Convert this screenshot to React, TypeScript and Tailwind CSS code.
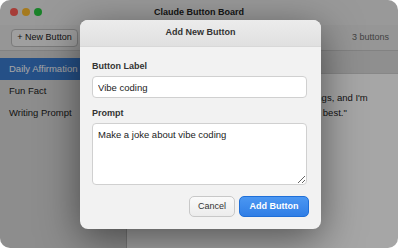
import { useState } from 'react'

const items = ['Daily Affirmation', 'Fun Fact', 'Writing Prompt']

export default function App() {
  const [label, setLabel] = useState('Vibe coding')
  const [prompt, setPrompt] = useState('Make a joke about vibe coding')
  const [selected] = useState(0)

  return (
    <div className="h-[250px] w-[400px] bg-white font-['Liberation_Sans',Arial,sans-serif] text-[#222]">
      <div className="relative flex h-[248px] w-[398px] flex-col overflow-hidden rounded-[10px] bg-white">
        {/* title bar */}
        <div className="relative flex h-[25px] shrink-0 items-center justify-center bg-[#ececec]">
          <div className="absolute left-[10px] top-[8px] flex gap-[4px]">
            <span className="h-[8px] w-[8px] rounded-full bg-[#ff5f57]" />
            <span className="h-[8px] w-[8px] rounded-full bg-[#febc2e]" />
            <span className="h-[8px] w-[8px] rounded-full bg-[#28c840]" />
          </div>
          <span className="text-[9px] font-bold text-[#222]">Claude Button Board</span>
        </div>

        {/* toolbar */}
        <div className="flex h-[26px] shrink-0 items-center justify-between border-b border-[#c8c8c8] bg-[#e6e6e6] pl-[11px] pr-[9px]">
          <button className="flex h-[18px] w-[67px] items-center justify-center rounded-[4px] border border-[#bdbdbd] bg-[#f4f4f4] text-[9px] text-[#222]">
            + New Button
          </button>
          <span className="text-[9px] text-[#666]">3 buttons</span>
        </div>

        <div className="flex min-h-0 flex-1">
          {/* sidebar */}
          <div className="w-[127px] shrink-0 border-r border-[#bcbcbc] bg-[#d9d9d9] pt-[7px]">
            {items.map((it, i) => (
              <div
                key={it}
                className={
                  i === selected
                    ? 'flex h-[22px] items-center bg-[#3a7bd0] px-[9px] text-[9.5px] text-white'
                    : 'flex h-[22px] items-center px-[9px] text-[9.5px] text-[#222]'
                }
              >
                {it}
              </div>
            ))}
          </div>

          {/* content */}
          <div className="flex flex-1 flex-col bg-white">
            <div className="flex h-[23px] shrink-0 items-center border-b border-[#cfcfcf] bg-[#dcdcdc] px-[12px] text-[9px] font-bold">
              Daily Affirmation
            </div>
            <div className="px-[12px] pt-[16px] text-[9.5px] leading-[15px] text-[#222]">
              <p className="whitespace-nowrap">"You are so capable of doing wonderful things, and I'm</p>
              <p className="whitespace-nowrap">growing every single day, and I'm doing my best."</p>
            </div>
          </div>
        </div>

        {/* modal overlay */}
        <div className="absolute inset-0 bg-black/35">
          <div className="absolute left-[80px] top-[20px] flex w-[241px] flex-col overflow-hidden rounded-[8px] bg-[#f2f2f2] shadow-[0_10px_40px_rgba(0,0,0,0.5)]">
            <div className="flex h-[27px] items-center justify-center border-b border-[#d8d8d8] bg-gradient-to-b from-[#ececec] to-[#e0e0e0] text-[9px] font-bold text-[#333]">
              Add New Button
            </div>
            <div className="flex flex-col px-[12px] pb-[12px] pt-[14px]">
              <label className="block text-[9px] font-bold leading-[10px] text-[#333]">Button Label</label>
              <input
                value={label}
                onChange={(e) => setLabel(e.target.value)}
                className="mr-[2px] mt-[5px] h-[22px] rounded-[4px] border border-[#d0d0d0] bg-white px-[5px] text-[9.5px] text-[#222] outline-none"
              />
              <label className="mt-[10px] block text-[9px] font-bold leading-[10px] text-[#333]">Prompt</label>
              <textarea
                value={prompt}
                onChange={(e) => setPrompt(e.target.value)}
                className="mr-[2px] mt-[5px] h-[62px] resize rounded-[4px] border border-[#d0d0d0] bg-white px-[5px] py-[5px] text-[9.5px] leading-[11px] text-[#222] outline-none"
              />
              <div className="mt-[11px] flex justify-end gap-[4px]">
                <button className="h-[21px] w-[46px] rounded-[5px] border border-[#c8c8c8] bg-gradient-to-b from-[#fafafa] to-[#ececec] text-[9px] text-[#333]">
                  Cancel
                </button>
                <button className="h-[21px] w-[70px] rounded-[5px] border border-[#1f6fd8] bg-gradient-to-b from-[#4b97f2] to-[#2f7ee6] text-[9px] font-bold text-white">
                  Add Button
                </button>
              </div>
            </div>
          </div>
        </div>
      </div>
    </div>
  )
}
